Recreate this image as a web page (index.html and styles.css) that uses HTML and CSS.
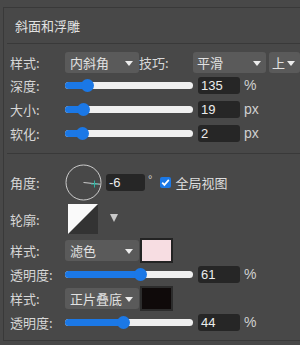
FILE: index.html
```html
<!DOCTYPE html>
<html>
<head>
<meta charset="utf-8">
<link rel="stylesheet" href="styles.css">
</head>
<body>
<div class="panel">
  <div class="title">斜面和浮雕</div>
  <div class="sep"></div>
  <div class="section s1">
    <div class="row r-sel">
      <span class="label">样式:</span>
      <div class="select w74 p5"><span>内斜角</span><i class="arrow"></i></div>
      <span class="label2">技巧:</span>
      <div class="select w73 p4"><span>平滑</span><i class="arrow"></i></div>
      <div class="select w31 p3"><span>上</span><i class="arrow"></i></div>
    </div>
    <div class="row r-sl">
      <span class="label">深度:</span>
      <div class="slider" style="--v:22px"><div class="fill"></div><div class="thumb"></div></div>
      <div class="num">135</div><span class="unit">%</span>
    </div>
    <div class="row r-sl">
      <span class="label">大小:</span>
      <div class="slider" style="--v:18px"><div class="fill"></div><div class="thumb"></div></div>
      <div class="num">19</div><span class="unit">px</span>
    </div>
    <div class="row r-sl">
      <span class="label">软化:</span>
      <div class="slider" style="--v:17px"><div class="fill"></div><div class="thumb"></div></div>
      <div class="num">2</div><span class="unit">px</span>
    </div>
  </div>
  <div class="sep"></div>
  <div class="section s2">
    <div class="row r-angle">
      <span class="label">角度:</span>
      <svg class="dial" width="37" height="37" viewBox="0 0 37 37">
        <circle cx="18.5" cy="18.5" r="17.5" fill="none" stroke="#cdcdcd" stroke-width="1"/>
        <line x1="18.5" y1="18.5" x2="35" y2="20.2" stroke="#cdcdcd" stroke-width="1"/>
        <path d="M29.5 16.5v7M26 20h7" stroke="#2fb3a3" stroke-width="1" fill="none"/>
      </svg>
      <div class="num num-angle">-6</div>
      <span class="deg">°</span>
      <span class="check"><svg width="11" height="11" viewBox="0 0 11 11"><path d="M2.2 5.6l2.2 2.3 4.4-5" stroke="#fff" stroke-width="1.7" fill="none"/></svg></span>
      <span class="check-label">全局视图</span>
    </div>
    <div class="row r-contour">
      <span class="label">轮廓:</span>
      <svg class="contour" width="30" height="30" viewBox="0 0 30 30">
        <rect x="0" y="0" width="30" height="30" fill="#333333"/>
        <polygon points="0,0 30,0 0,30" fill="#fafafa"/>
      </svg>
      <svg class="drop" width="8" height="8" viewBox="0 0 8 8"><polygon points="0,0 8,0 4,8" fill="#c9c9c9"/></svg>
    </div>
    <div class="row r-swatch">
      <span class="label">样式:</span>
      <div class="select w74 p5"><span>滤色</span><i class="arrow"></i></div>
      <div class="swatch pink"></div>
    </div>
    <div class="row r-op">
      <span class="label">透明度:</span>
      <div class="slider" style="--v:75px"><div class="fill"></div><div class="thumb"></div></div>
      <div class="num">61</div><span class="unit">%</span>
    </div>
    <div class="row r-swatch r-swatch2">
      <span class="label">样式:</span>
      <div class="select w74 p5"><span>正片叠底</span><i class="arrow"></i></div>
      <div class="swatch black"></div>
    </div>
    <div class="row r-op">
      <span class="label">透明度:</span>
      <div class="slider" style="--v:58px"><div class="fill"></div><div class="thumb"></div></div>
      <div class="num">44</div><span class="unit">%</span>
    </div>
  </div>
</div>
</body>
</html>
```

FILE: styles.css
```css
html, body {
  margin: 0;
  padding: 0;
}
body {
  width: 300px;
  height: 345px;
  overflow: hidden;
  background: #484848;
  font-family: "Noto Sans CJK SC", sans-serif;
  font-size: 13px;
  color: #d7d7d7;
}
.panel {
  margin: 7px 0 0 3px;
  width: 297px;
  height: 334px;
  overflow: hidden;
  box-sizing: border-box;
  border-top: 1px solid #393939;
  border-left: 1px solid #393939;
  border-bottom: 1px solid #393939;
}
.title {
  height: 35px;
  display: flex;
  align-items: center;
  padding-left: 11px;
  color: #e0e0e0;
  line-height: 1;
}
.sep {
  height: 1px;
  background: #393939;
  margin-left: 3px;
}
.section.s1 {
  padding: 8px 0 8px 0;
}
.section.s2 {
  padding-top: 10px;
}
.row {
  display: flex;
  align-items: center;
  padding-left: 6px;
  line-height: 1;
}
.label {
  width: 55px;
  flex: none;
  white-space: nowrap;
}
.label2 {
  width: 54px;
  flex: none;
}
.r-sel { height: 21px; }
.r-sl { height: 24px; }
.r-angle { height: 37px; }
.r-contour { height: 30px; margin-top: 3px; }
.r-swatch { height: 25px; margin-top: 4px; }
.r-swatch2 { margin-top: 1px; }
.r-op { height: 22px; }

.select {
  height: 21px;
  box-sizing: border-box;
  background: #5a5a5a;
  border-radius: 3px;
  display: flex;
  align-items: center;
  color: #e2e2e2;
  flex: none;
  white-space: nowrap;
}
.w74 { width: 74px; }
.w73 { width: 73px; }
.w31 { width: 31px; margin-left: 3px; }
.p5 { padding-left: 5px; }
.p4 { padding-left: 4px; }
.p3 { padding-left: 3px; }
.arrow {
  margin-left: auto;
  margin-right: 6px;
  width: 0;
  height: 0;
  border-left: 4px solid transparent;
  border-right: 4px solid transparent;
  border-top: 5px solid #ececec;
  margin-top: 2px;
}
.w73 .arrow { margin-right: 5px; }
.w31 .arrow { margin-right: 4px; margin-left: 2px; }

.slider {
  position: relative;
  width: 128px;
  height: 7px;
  background: #f0f0f0;
  border-radius: 4px;
  flex: none;
}
.fill {
  position: absolute;
  left: 0;
  top: 0;
  bottom: 0;
  width: var(--v);
  background: #1b78e6;
  border-radius: 4px 0 0 4px;
}
.thumb {
  position: absolute;
  left: var(--v);
  top: 50%;
  width: 13px;
  height: 13px;
  margin: -6.5px 0 0 -6.5px;
  border-radius: 50%;
  background: #1b78e6;
}
.num {
  width: 42px;
  height: 17px;
  box-sizing: border-box;
  margin-left: 5px;
  padding-left: 3px;
  background: #262626;
  border-radius: 3px;
  font-family: "Liberation Sans", Arial, sans-serif;
  font-size: 13px;
  line-height: 17px;
  color: #ececec;
  flex: none;
}
.unit {
  margin-left: 4px;
  font-family: "Liberation Sans", Arial, sans-serif;
  font-size: 14px;
  color: #d0d0d0;
}
.dial {
  flex: none;
  display: block;
}
.num-angle {
  width: 39px;
  margin-left: 4px;
}
.deg {
  margin-left: 3px;
  margin-top: -6px;
  font-family: "Liberation Sans", Arial, sans-serif;
  font-size: 11px;
  color: #d0d0d0;
}
.check {
  width: 11px;
  height: 11px;
  margin-left: 8px;
  background: #1b78e6;
  border-radius: 2px;
  display: flex;
  flex: none;
}
.check svg { display: block; }
.check-label {
  margin-left: 4px;
  color: #dedede;
}
.contour {
  display: block;
  margin-left: 3px;
  flex: none;
}
.drop {
  display: block;
  margin-left: 12px;
  margin-top: -2px;
}
.swatch {
  width: 33px;
  height: 25px;
  box-sizing: border-box;
  margin-left: 1px;
  border: 2px solid #232323;
  flex: none;
}
.swatch.pink { background: #f7dde2; }
.swatch.black { background: #0f0a0a; border-color: #2c2c2c; }
```
